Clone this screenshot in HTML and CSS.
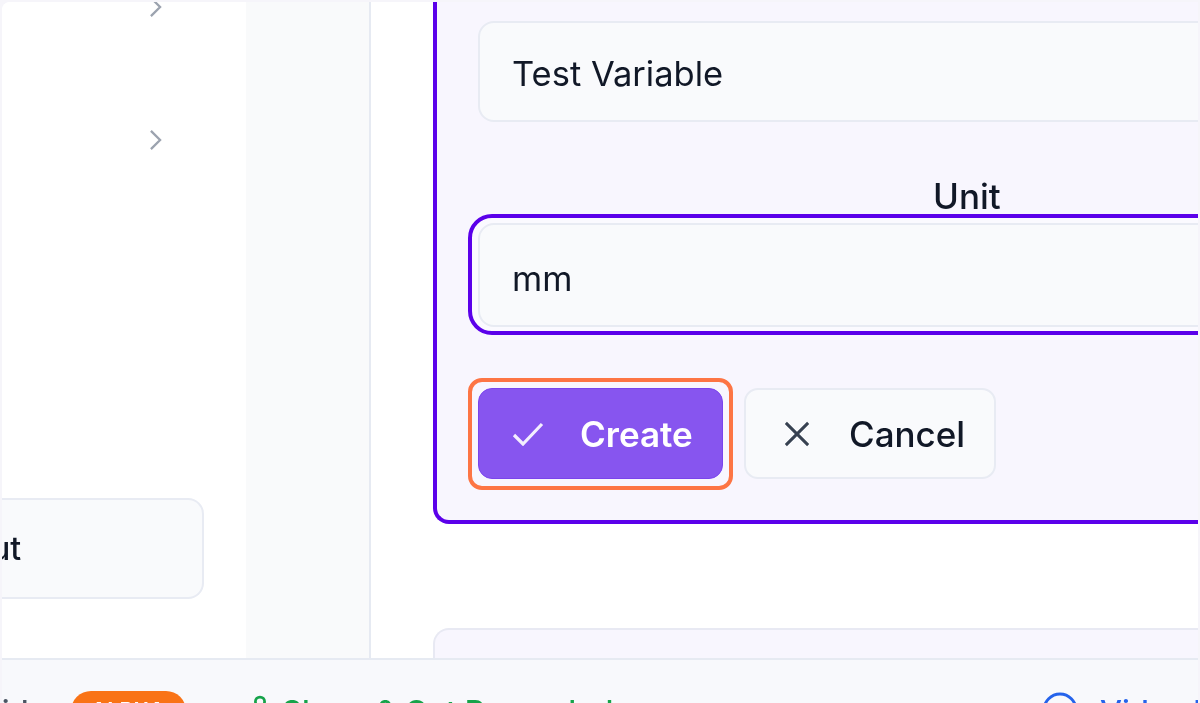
FILE: index.html
```html
<!DOCTYPE html>
<html lang="en">
<head>
<meta charset="utf-8">
<title>Create variable</title>
<link rel="stylesheet" href="styles.css">
</head>
<body>
<div class="window">
  <div class="main">
    <aside class="sidebar">
      <div class="nav">
        <div class="nav-row nav-row-first">
          <svg class="chevron" viewBox="0 0 14 24"><path d="M2 2 L12 12 L2 22"/></svg>
        </div>
        <div class="nav-row">
          <svg class="chevron" viewBox="0 0 14 24"><path d="M2 2 L12 12 L2 22"/></svg>
        </div>
      </div>
      <button class="side-button"><span>Layout</span></button>
    </aside>
    <div class="gutter"></div>
    <section class="content">
      <div class="panel">
        <div class="field-box field-name">Test Variable</div>
        <label class="unit-label">Unit</label>
        <div class="focus-ring">
          <div class="field-box field-unit">mm</div>
        </div>
        <div class="actions">
          <div class="highlight">
            <button class="btn btn-primary">
              <svg class="btn-icon" viewBox="0 0 32 24"><path d="M2 13 L11 22 L30 2"/></svg>
              Create
            </button>
          </div>
          <button class="btn btn-secondary">
            <svg class="btn-icon btn-icon-x" viewBox="0 0 28 28"><path d="M2 2 L26 26 M26 2 L2 26"/></svg>
            Cancel
          </button>
        </div>
      </div>
      <div class="panel-next"></div>
    </section>
  </div>
  <footer class="footer">
    <span class="footer-clip">Guide</span>
    <span class="badge">ALPHA</span>
    <span class="share">
      <svg class="share-icon" viewBox="0 0 24 30"><circle cx="12" cy="8" r="5"/><path d="M2 30 C2 14 22 14 22 30"/></svg>
      Share &amp; Get Rewarded
    </span>
    <span class="video">
      <svg class="video-icon" viewBox="0 0 36 36"><circle cx="18" cy="18" r="16"/></svg>
      Video Tutorials
    </span>
  </footer>
</div>
</body>
</html>
```
FILE: styles.css
```css
* { box-sizing: border-box; }
html, body { margin: 0; padding: 0; height: 100%; overflow: hidden; }
body { font-family: Inter, "Liberation Sans", sans-serif; background: #f6f5fb; }
.window {
  width: 1200px; height: 703px; padding: 2px 2px 0 2px;
  background: #f6f5fa; display: flex; flex-direction: column; overflow: hidden;
  filter: blur(0.4px);
}
.main { display: flex; height: 656px; background: #fff; border-top-left-radius: 8px; overflow: hidden; flex: none; }
.sidebar { width: 244px; flex: none; background: #fff; display: flex; flex-direction: column; }
.nav { height: 496px; flex: none; }
.nav-row { height: 24px; display: flex; justify-content: flex-end; padding: 0 84px 0 0; align-items: center; }
.nav-row-first { height: 14px; align-items: flex-start; margin-top: -6px; margin-bottom: 118px; }
.chevron { width: 13px; height: 22px; flex: none; fill: none; stroke: #9ca3af; stroke-width: 2.5; }
.side-button {
  width: 202px; height: 101px; padding: 0; border: 2px solid #e8ebf3; border-left: 0;
  border-radius: 0 16px 16px 0; background: #f9fafc; overflow: hidden; flex: none;
  display: flex; align-items: center; justify-content: flex-end;
  font: 500 32px Inter, sans-serif; color: #111827;
}
.side-button span { margin-right: auto; margin-left: -84px; }
.gutter { width: 125px; flex: none; background: #f9fafb; border-right: 2px solid #e6eaf2; }
.content { flex: 1; min-width: 0; padding-left: 62px; background: #fff; display: flex; flex-direction: column; }
.panel {
  height: 522px; margin-right: -60px; padding: 19px 0 0 41px; flex: none;
  background: #f8f6fe; border: 4px solid #5b00ea; border-top: 0; border-right: 0;
  border-bottom-left-radius: 16px; display: flex; flex-direction: column;
}
.field-box {
  height: 101px; padding: 3px 0 0 32px; display: flex; align-items: center; flex: none;
  background: #f9fafc; border: 2px solid #e8ebf3; border-radius: 16px;
  font: 400 34.5px Inter, sans-serif; color: #111827;
}
.field-unit { height: 104px; padding-top: 6px; }
.unit-label { height: 92px; flex: none; padding: 56px 0 0 455px; font: 500 35px/36px Inter, sans-serif; color: #111827; white-space: nowrap; }
.focus-ring {
  margin-left: -10px; padding: 5px 0 0 6px; height: 121px; flex: none;
  border: 4px solid #5b00ea; border-radius: 24px;
  background: #fbfaff;
}
.actions { display: flex; align-items: flex-start; margin-top: 43px; margin-left: -10px; gap: 11px; flex: none; }
.highlight { padding: 6px 6px 7px; border: 4px solid #fd7544; border-radius: 14px; flex: none; }
.btn {
  height: 91px; display: flex; align-items: center; border-radius: 14px;
  font: 500 35px Inter, sans-serif;
}
.btn-primary { width: 245px; padding: 0 0 0 33px; gap: 36px; background: #8755ef; border: 1px solid #7a44ec; color: #fff; font-weight: 600; }
.btn-secondary { width: 252px; margin-top: 10px; padding: 0 0 0 37px; gap: 38px; background: #f9fafc; border: 2px solid #e8ebf3; color: #111827; }
.btn-icon { width: 32px; height: 24px; flex: none; fill: none; stroke: #f3eefe; stroke-width: 3.2; }
.btn-icon-x { width: 28px; height: 26px; stroke: #374151; }
.panel-next {
  height: 200px; margin-top: 104px; background: #f8f6fe; border: 2px solid #e8e9f3; border-right: 0;
  border-radius: 16px 0 0 0; margin-right: -60px; flex: none;
}
.footer {
  height: 45px; flex: none; display: flex; padding-top: 32px;
  background: #f8f9fc; border-top: 2px solid #e6eaf2;
  font: 500 31px/40px Inter, sans-serif; white-space: nowrap; overflow: hidden;
}
.footer-clip { width: 69px; flex: none; display: flex; justify-content: flex-end; padding-right: 24px; color: #4b5563; }
.badge {
  width: 115px; height: 40px; margin-top: -1px; border-radius: 20px; background: #f97316; color: #fff;
  font: 700 20px/38px Inter, sans-serif; text-align: center; flex: none; letter-spacing: 1px;
}
.share { margin-left: 63px; display: flex; gap: 11px; color: #16a34a; width: 793px; flex: none; }
.share-icon { width: 22px; height: 30px; margin-top: 1px; flex: none; fill: none; stroke: #16a34a; stroke-width: 3; }
.video { display: flex; gap: 22px; color: #2563eb; flex: none; }
.video-icon { width: 36px; height: 36px; flex: none; fill: none; stroke: #2563eb; stroke-width: 3; }
```
